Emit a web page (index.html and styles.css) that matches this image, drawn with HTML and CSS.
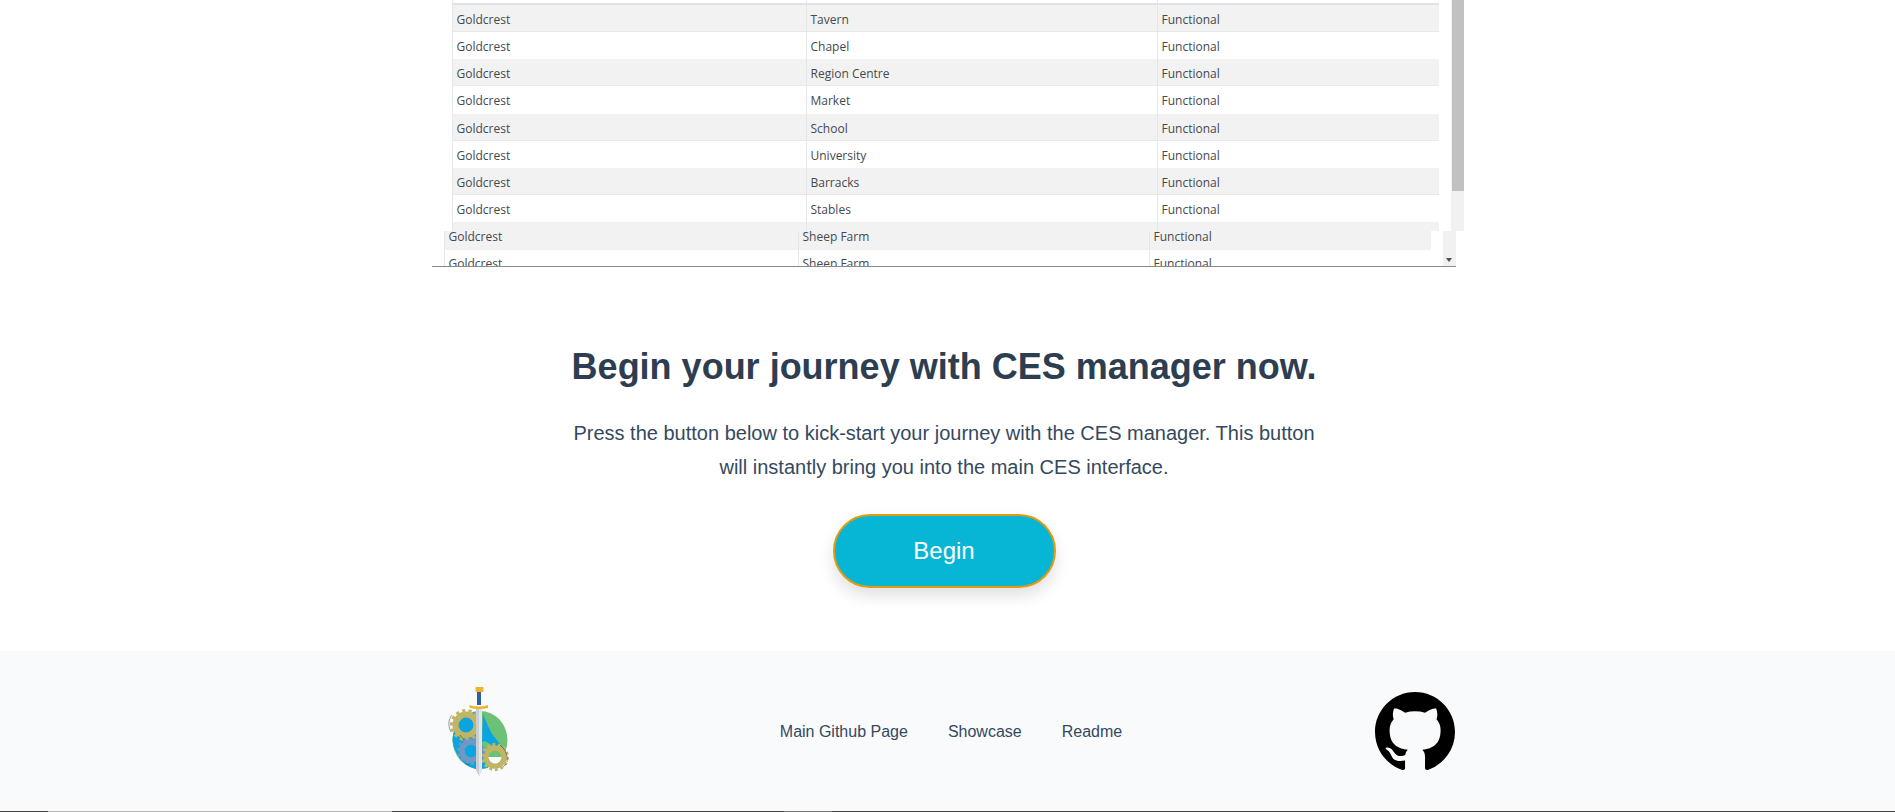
FILE: index.html
```html
<!DOCTYPE html>
<html lang="en">
<head>
<meta charset="utf-8">
<title>CES manager</title>
<link rel="stylesheet" href="styles.css">
</head>
<body>
<section class="preview">
  <div class="shot">
    <div class="shot-upper">
      <div class="table-rows">
        <div class="row stub"><span></span><span></span><span></span></div>
        <div class="row"><span>Goldcrest</span><span>Tavern</span><span>Functional</span></div>
        <div class="row"><span>Goldcrest</span><span>Chapel</span><span>Functional</span></div>
        <div class="row"><span>Goldcrest</span><span>Region Centre</span><span>Functional</span></div>
        <div class="row"><span>Goldcrest</span><span>Market</span><span>Functional</span></div>
        <div class="row"><span>Goldcrest</span><span>School</span><span>Functional</span></div>
        <div class="row"><span>Goldcrest</span><span>University</span><span>Functional</span></div>
        <div class="row"><span>Goldcrest</span><span>Barracks</span><span>Functional</span></div>
        <div class="row"><span>Goldcrest</span><span>Stables</span><span>Functional</span></div>
        <div class="row"><span></span><span></span><span></span></div>
      </div>
      <div class="scroll-track"><div class="scroll-thumb"></div></div>
    </div>
    <div class="shot-lower">
      <div class="table-lower">
        <div class="row lower grey"><span>Goldcrest</span><span>Sheep Farm</span><span>Functional</span></div>
        <div class="row lower"><span>Goldcrest</span><span>Sheep Farm</span><span>Functional</span></div>
      </div>
      <div class="lower-track"><div class="arrow"></div></div>
    </div>
  </div>
</section>
<section class="cta">
  <h2 class="cta-title">Begin your journey with CES manager now.</h2>
  <p class="cta-text">Press the button below to kick-start your journey with the CES manager. This button will instantly bring you into the main CES interface.</p>
  <a class="cta-button" href="#">Begin</a>
</section>
<footer class="footer">
  <svg class="logo" width="66" height="96" viewBox="0 0 66 96" aria-label="CES logo">
    <ellipse cx="34" cy="56" rx="27.5" ry="29" fill="#6cc177"/>
    <path d="M30 28 L30 85 C18 83 8 70 6.5 56 C7 44 14 32 30 28 Z" fill="#0aa5e0"/>
    <path d="M37 30 L42 42 L46 50 L54 60 L49 63 L39 57 L36 58 Z M36 70 L42 84 L34 85 Z" fill="#0aa5e0"/>
    <g fill="none" stroke="#c0b565">
      <circle cx="20" cy="41" r="10.5" stroke-width="6"/>
      <circle cx="20" cy="41" r="14.5" stroke-width="3" stroke-dasharray="3.2 3.2"/>
      <circle cx="49" cy="73" r="9" stroke-width="5.5"/>
      <circle cx="49" cy="73" r="12.5" stroke-width="3" stroke-dasharray="2.8 2.8"/>
    </g>
    <path d="M42.5 73 A6.5 6.5 0 0 0 55.500 73 Z" fill="#f8f9fa"/>
    <g fill="none" stroke="#6f98c2">
      <circle cx="25" cy="67" r="9" stroke-width="5.5"/>
      <circle cx="25" cy="67" r="12.5" stroke-width="3" stroke-dasharray="2.8 2.8"/>
    </g>
    <path d="M6 31 C2 36 2 42 5 48 M14 51 L18 56 M19 79 L23 81 M54 61 C60 66 62 72 61 78 M60 80 L57 83" fill="none" stroke="#333" stroke-width=".7" opacity=".7"/>
    <path d="M30 24 H36 V86 L33 92 L30 86 Z" fill="#c9ced2"/>
    <path d="M33 24 H36 V86 L33 92 Z" fill="#e2e5e8"/>
    <rect x="31" y="8" width="4" height="13" fill="#2f5fa0"/>
    <rect x="29.5" y="3" width="8" height="5" rx="1" fill="#e8b52b"/>
    <path d="M23 21 Q33 24 42 21 L42 24 Q33 26 24 24 Z" fill="#e8b52b"/>
  </svg>
  <nav class="footer-links">
    <a href="#">Main Github Page</a>
    <a href="#">Showcase</a>
    <a href="#">Readme</a>
  </nav>
  <svg class="github" width="80" height="80" viewBox="0 0 16 16" aria-label="GitHub">
    <path d="M8 0C3.58 0 0 3.58 0 8c0 3.54 2.29 6.53 5.47 7.59.4.07.55-.17.55-.38 0-.19-.01-.82-.01-1.49-2.01.37-2.53-.49-2.69-.94-.09-.23-.48-.94-.82-1.13-.28-.15-.68-.52-.01-.53.63-.01 1.08.58 1.23.82.72 1.21 1.87.87 2.33.66.07-.52.28-.87.51-1.07-1.78-.2-3.64-.89-3.64-3.95 0-.87.31-1.59.82-2.15-.08-.2-.36-1.02.08-2.12 0 0 .67-.21 2.2.82.64-.18 1.32-.27 2-.27s1.36.09 2 .27c1.53-1.04 2.2-.82 2.2-.82.44 1.1.16 1.92.08 2.12.51.56.82 1.27.82 2.15 0 3.07-1.87 3.75-3.65 3.95.29.25.54.73.54 1.48 0 1.07-.01 1.93-.01 2.2 0 .21.15.46.55.38A8.01 8.01 0 0 0 16 8c0-4.42-3.58-8-8-8z"/>
  </svg>
</footer>
<div class="edge"><span class="edge-a"></span><span class="edge-b"></span></div>
</body>
</html>
```

FILE: styles.css
```css
* { box-sizing: border-box; }
html, body { margin: 0; padding: 0; height: 812px; overflow: hidden; }
body {
  background: #fff;
  color: #2c3e50;
  font-family: "Liberation Sans", Arial, sans-serif;
  position: relative;
}
.preview { height: 267px; padding-left: 432px; }
.shot {
  width: 1024px;
  height: 267px;
  border-bottom: 1px solid #8a8a8a;
  font-family: "Open Sans", sans-serif;
  font-size: 12px;
  color: #43494f;
}
.shot-upper { display: flex; width: 1032px; height: 231px; padding-left: 20px; }
.table-rows { flex: none; width: 987px; height: 231px; overflow: hidden; }
.row {
  display: grid;
  grid-template-columns: 354px 351px 282px;
  height: 27.15px;
  line-height: 29px;
  background: #fff;
}
.table-rows .row:nth-child(even), .row.grey { background: #f2f2f2; border-bottom: 1px solid #e6e8eb; }
.row span { padding-left: 3.5px; border-left: 1px solid #e4e7ea; white-space: nowrap; }
.table-rows .row.stub { height: 5px; background: #fff; border-bottom: 2px solid #dfe3e7; }
.scroll-track { flex: none; width: 13px; margin-left: 12px; height: 231px; padding-left: 1px; background: #f1f1f1; }
.scroll-thumb { height: 191px; background: #c1c1c1; }
.shot-lower { display: flex; height: 35px; padding-left: 12px; overflow: hidden; }
.table-lower { flex: none; width: 987px; margin-top: -8px; }
.row.lower { height: 27px; line-height: 27px; }
.row.lower.grey { border-bottom: 0; }
.lower-track { flex: none; width: 13px; margin-left: 12px; position: relative; background: #f1f1f1; }
.arrow {
  position: absolute;
  left: 3px;
  top: 27px;
  border-left: 3.5px solid transparent;
  border-right: 3.5px solid transparent;
  border-top: 4px solid #505050;
}
.cta { height: 384px; padding-right: 7px; display: flex; flex-direction: column; align-items: center; }
.cta-title { margin: 79px 0 0; font-size: 36px; line-height: 42px; font-weight: 700; }
.cta-text { margin: 28px 0 0; width: 760px; text-align: center; font-size: 20px; line-height: 34px; color: #34495e; }
.cta-button {
  margin-top: 30px;
  width: 223px;
  height: 74px;
  display: flex;
  align-items: center;
  justify-content: center;
  border: 2px solid #e49b0f;
  border-radius: 37px;
  background: #07b6d5;
  color: #fff;
  font-size: 24px;
  text-decoration: none;
  box-shadow: 0 8px 16px rgba(0, 0, 0, .12);
}
.footer {
  height: 161px;
  padding: 0 440px 0 446px;
  background: #f9fafc;
  display: flex;
  align-items: center;
  justify-content: space-between;
}
.logo { display: block; flex: none; }
.footer-links { display: flex; gap: 40px; font-size: 16px; margin-left: 15px; }
.footer-links a { color: #34495e; text-decoration: none; }
.github { display: block; flex: none; }
.edge {
  position: absolute;
  left: 0; right: 0; bottom: 0;
  height: 1px;
  background: #444;
}
.edge-a { position: absolute; left: 48px; width: 344px; height: 1px; background: #b5b5b5; }
.edge-b { position: absolute; left: 784px; width: 48px; height: 1px; background: #777; }
```
